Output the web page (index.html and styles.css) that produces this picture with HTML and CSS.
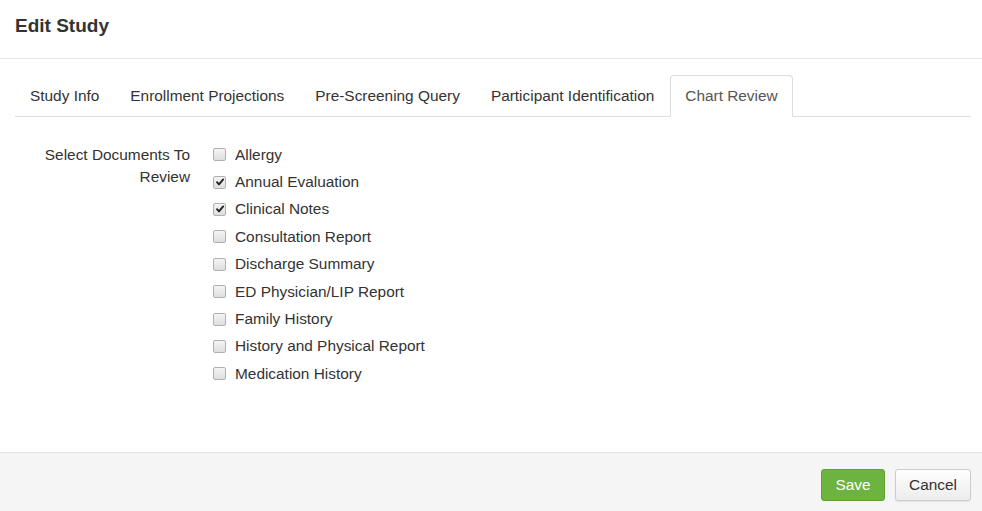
FILE: index.html
```html
<!DOCTYPE html>
<html>
<head>
<meta charset="utf-8">
<title>Edit Study</title>
<link rel="stylesheet" href="styles.css">
</head>
<body>
<div class="modal">
  <div class="modal-header">
    <h4 class="modal-title">Edit Study</h4>
  </div>
  <div class="modal-body">
    <ul class="nav-tabs">
      <li class="tab">Study Info</li>
      <li class="tab">Enrollment Projections</li>
      <li class="tab">Pre-Screening Query</li>
      <li class="tab">Participant Identification</li>
      <li class="tab active">Chart Review</li>
    </ul>
    <div class="form-row">
      <div class="form-label">Select Documents To Review</div>
      <div class="checks">
        <div class="check"><span class="box"></span>Allergy</div>
        <div class="check"><span class="box checked"><svg viewBox="0 0 12 12" width="12" height="12"><path d="M3 6.2 L5 8.4 L9.2 3.4" fill="none" stroke="#222" stroke-width="1.9" stroke-linecap="round" stroke-linejoin="round"/></svg></span>Annual Evaluation</div>
        <div class="check"><span class="box checked"><svg viewBox="0 0 12 12" width="12" height="12"><path d="M3 6.2 L5 8.4 L9.2 3.4" fill="none" stroke="#222" stroke-width="1.9" stroke-linecap="round" stroke-linejoin="round"/></svg></span>Clinical Notes</div>
        <div class="check"><span class="box"></span>Consultation Report</div>
        <div class="check"><span class="box"></span>Discharge Summary</div>
        <div class="check"><span class="box"></span>ED Physician/LIP Report</div>
        <div class="check"><span class="box"></span>Family History</div>
        <div class="check"><span class="box"></span>History and Physical Report</div>
        <div class="check"><span class="box"></span>Medication History</div>
      </div>
    </div>
  </div>
  <div class="modal-footer">
    <button class="btn btn-save">Save</button>
    <button class="btn btn-cancel">Cancel</button>
  </div>
</div>
</body>
</html>
```
FILE: styles.css
```css
html, body {
  margin: 0;
  padding: 0;
  background: #fff;
}
body {
  font-family: "Liberation Sans", Arial, sans-serif;
  font-size: 15.4px;
  color: #333;
}
.modal {
  display: flex;
  flex-direction: column;
  height: 100vh;
}
.modal-header {
  padding: 15px;
  border-bottom: 1px solid #e5e5e5;
  height: 28px;
}
.modal-title {
  margin: 0;
  font-size: 19px;
  font-weight: bold;
  line-height: 22px;
  color: #333;
  padding-top: 0;
}
.modal-body {
  flex: 1;
  padding: 16px 11px 0 15px;
}
.nav-tabs {
  list-style: none;
  margin: 0;
  padding: 0;
  display: flex;
  border-bottom: 1px solid #ddd;
}
.tab {
  padding: 10px 14px;
  line-height: 20px;
  margin-right: 1px;
  margin-bottom: -1px;
  border: 1px solid transparent;
  border-radius: 4px 4px 0 0;
  color: #333;
}
.tab.active {
  color: #555;
  border-color: #ddd;
  border-bottom-color: #fff;
  background: #fff;
}
.form-row {
  display: flex;
  padding-top: 31px;
}
.form-label {
  width: 175px;
  padding-right: 10px;
  text-align: right;
  line-height: 22px;
  margin-top: -4px;
  color: #333;
}
.checks {
  padding-left: 13px;
}
.check {
  display: flex;
  align-items: center;
  height: 27.4px;
  margin-top: -7px;
  margin-bottom: 7px;
}
.box {
  box-sizing: border-box;
  width: 13px;
  height: 13px;
  border: 1px solid #b0b0b0;
  border-radius: 2px;
  background: linear-gradient(#f4f4f4, #dedede);
  margin-right: 9px;
  display: flex;
  align-items: center;
  justify-content: center;
}
.box svg {
  display: block;
  flex: none;
}
.modal-footer {
  background: #f5f5f5;
  border-top: 1px solid #e5e5e5;
  padding: 16px 11px 10px 15px;
  display: flex;
  justify-content: flex-end;
  gap: 10px;
  height: 32px;
}
.btn {
  font-family: "Liberation Sans", Arial, sans-serif;
  font-size: 15.4px;
  height: 32px;
  border-radius: 3px;
  padding: 0 12px;
  cursor: pointer;
}
.btn-save {
  width: 64px;
  background: #6db33f;
  border: 1px solid #5fa232;
  color: #fff;
}
.btn-cancel {
  width: 76px;
  background: linear-gradient(#ffffff, #ececec);
  border: 1px solid #ccc;
  color: #333;
  box-shadow: 0 1px 1px rgba(0,0,0,0.08);
}
```
